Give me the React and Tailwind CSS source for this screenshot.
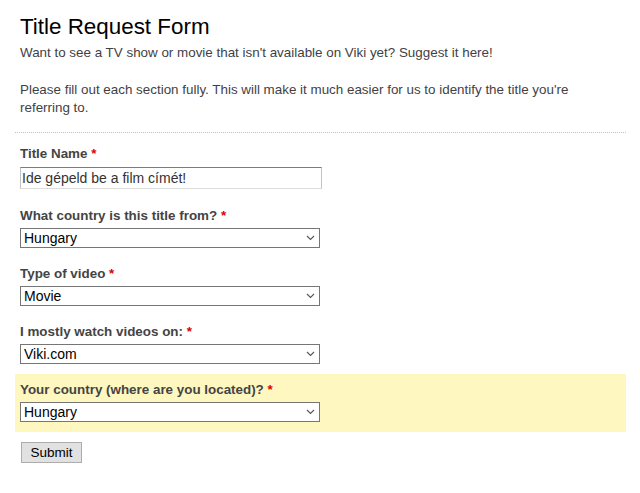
import React from "react";

function Chevron() {
  return (
    <svg
      className="pointer-events-none absolute right-[5px] top-1/2 -translate-y-1/2"
      width="9"
      height="6"
      viewBox="0 0 9 6"
      fill="none"
    >
      <polyline points="1,1 4.5,4.5 8,1" stroke="#555" strokeWidth="1.1" />
    </svg>
  );
}

function Label({ children }) {
  return (
    <div className="text-[13.4px] leading-[18px] font-bold text-[#444] mb-[3.5px]">
      {children} <span className="text-[#df0000]">*</span>
    </div>
  );
}

function SelectField({ label, value, highlight }) {
  return (
    <div className={`px-[5px] pt-[7px] pb-[9.5px] ${highlight ? "bg-[#fff7c0]" : ""}`}>
      <Label>{label}</Label>
      <div className="relative w-[300px] h-[20px]">
        <select
          defaultValue={value}
          className="appearance-none block w-[300px] h-[20px] border border-[#767676] bg-white pl-[3px] pr-[20px] text-[14px] leading-[18px] text-black outline-none rounded-none"
          style={{ fontFamily: '"Liberation Sans", Arial, sans-serif' }}
        >
          <option>{value}</option>
        </select>
        <Chevron />
      </div>
    </div>
  );
}

export default function App() {
  return (
    <div
      className="w-[640px] h-[493px] bg-white overflow-hidden"
      style={{ fontFamily: '"Liberation Sans", Arial, sans-serif' }}
    >
      <div className="ml-[15px] w-[611px] pt-[14px]">
        <div className="px-[5px] pb-[16px] border-b border-dotted border-[#c0c0c0]">
          <h2 className="text-[22.4px] leading-[26px] text-black font-normal">
            Title Request Form
          </h2>
          <div className="mt-[4px] text-[13.4px] leading-[17.5px] text-[#3f3f46]">
            <p>Want to see a TV show or movie that isn't available on Viki yet? Suggest it here!</p>
            <p className="mt-[19.5px]">
              Please fill out each section fully. This will make it much easier for us to identify the title you're referring to.
            </p>
          </div>
        </div>

        <div className="mt-[5px]">
          <div className="px-[5px] pt-[7px] pb-[11px]">
            <Label>Title Name</Label>
            <input
              type="text"
              defaultValue="Ide gépeld be a film címét!"
              className="block w-[302px] h-[22px] bg-white border-t border-t-[#7c7c7c] border-l border-l-[#c3c3c3] border-r border-r-[#c3c3c3] border-b border-b-[#dddddd] px-[1px] text-[14px] leading-[20px] text-[#333] outline-none"
              style={{ fontFamily: '"Liberation Sans", Arial, sans-serif' }}
            />
          </div>
          <SelectField label="What country is this title from?" value="Hungary" />
          <SelectField label="Type of video" value="Movie" />
          <SelectField label="I mostly watch videos on:" value="Viki.com" />
          <SelectField label="Your country (where are you located)?" value="Hungary" highlight />
        </div>

        <div className="mt-[8.5px] pl-[6px]">
          <button
            type="button"
            className="h-[21px] px-[8.5px] border border-[#adadad] bg-[#e1e1e1] text-[13.5px] leading-[19px] text-black"
            style={{ fontFamily: '"Liberation Sans", Arial, sans-serif' }}
          >
            Submit
          </button>
        </div>
      </div>
    </div>
  );
}
